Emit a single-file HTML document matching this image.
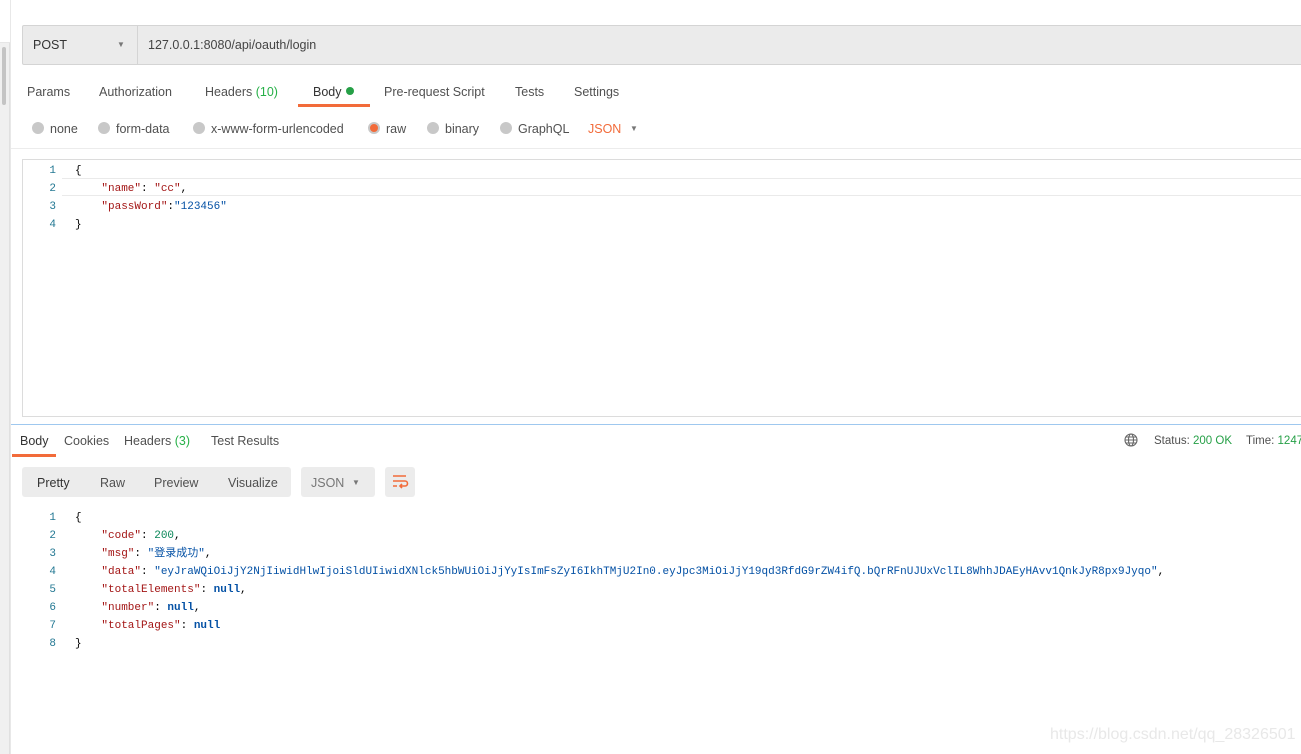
<!DOCTYPE html>
<html><head><meta charset="utf-8"><style>
*{margin:0;padding:0;box-sizing:border-box}
body{width:1301px;height:754px;overflow:hidden;background:#fff;font-family:"Liberation Sans","Noto Sans CJK SC",sans-serif;font-size:12.5px;color:#505050;position:relative}
.a{position:absolute;white-space:nowrap}
.mono{font-family:"Liberation Mono","Noto Sans CJK SC",monospace;font-size:11px;white-space:pre}
.mono div{height:18px;line-height:18px}
.ln{position:absolute;width:20px;text-align:right;color:#237893;font-family:"Liberation Mono",monospace;font-size:11px;line-height:18px}
.k{color:#a31515}.s{color:#0451a5}.n{color:#098658}.nl{color:#0451a5;font-weight:bold}.p{color:#000}
.radio{position:absolute;width:12px;height:12px;border-radius:50%;background:#c8c8c8}
</style></head><body>
<div class="a" style="left:0;top:43px;width:10px;height:711px;background:#f0f0f0;border-right:1px solid #e0e0e0"></div>
<div class="a" style="left:0;top:42px;width:10px;height:1px;background:#e6e6e6"></div>
<div class="a" style="left:2px;top:47px;width:4px;height:58px;background:#c4c4c4;border-radius:2px"></div>
<div class="a" style="left:10px;top:0;width:1px;height:754px;background:#e8e8e8"></div>

<div class="a" style="left:22px;top:25px;width:1290px;height:40px;background:#ebebeb;border:1px solid #d4d4d4;border-radius:2px"></div>
<div class="a" style="left:137px;top:26px;width:1px;height:38px;background:#d4d4d4"></div>
<div class="a" style="left:33px;top:38px;color:#333;font-size:12.5px">POST</div>
<div class="a" style="left:117px;top:40px;color:#777;font-size:8px">▼</div>
<div class="a" style="left:148px;top:38px;color:#444">127.0.0.1:8080/api/oauth/login</div>

<div class="a" style="left:27px;top:85px">Params</div>
<div class="a" style="left:99px;top:85px">Authorization</div>
<div class="a" style="left:205px;top:85px">Headers <span style="color:#26b047">(10)</span></div>
<div class="a" style="left:313px;top:85px;color:#333">Body</div>
<div class="a" style="left:346px;top:87px;width:8px;height:8px;border-radius:50%;background:#26a047"></div>
<div class="a" style="left:298px;top:104px;width:72px;height:3px;background:#f26b3a"></div>
<div class="a" style="left:384px;top:85px">Pre-request Script</div>
<div class="a" style="left:515px;top:85px">Tests</div>
<div class="a" style="left:574px;top:85px">Settings</div>

<div class="radio" style="left:32px;top:122px"></div><div class="a" style="left:50px;top:122px">none</div>
<div class="radio" style="left:98px;top:122px"></div><div class="a" style="left:116px;top:122px">form-data</div>
<div class="radio" style="left:193px;top:122px"></div><div class="a" style="left:211px;top:122px">x-www-form-urlencoded</div>
<div class="radio" style="left:368px;top:122px;background:#f26b3a;border:2px solid #c8c8c8"></div><div class="a" style="left:386px;top:122px">raw</div>
<div class="radio" style="left:427px;top:122px"></div><div class="a" style="left:445px;top:122px">binary</div>
<div class="radio" style="left:500px;top:122px"></div><div class="a" style="left:518px;top:122px">GraphQL</div>
<div class="a" style="left:588px;top:122px;color:#f26b3a">JSON</div>
<div class="a" style="left:630px;top:124px;color:#777;font-size:8px">▼</div>
<div class="a" style="left:11px;top:148px;width:1290px;height:1px;background:#ececec"></div>

<div class="a" style="left:22px;top:159px;width:1290px;height:258px;border:1px solid #dcdcdc"></div>
<div class="a" style="left:62px;top:178px;width:1240px;height:18px;border-top:1px solid #eaeaea;border-bottom:1px solid #eaeaea"></div>
<div class="ln" style="left:36px;top:162px">1<br>2<br>3<br>4</div>
<div class="a mono" style="left:75px;top:162px"><div class="p">{</div><div>    <span class="k">"name"</span><span class="p">: </span><span class="k">"cc"</span><span class="p">,</span></div><div>    <span class="k">"passWord"</span><span class="p">:</span><span class="s">"123456"</span></div><div class="p">}</div></div>

<div class="a" style="left:11px;top:424px;width:1290px;height:1px;background:#9fc8ef"></div>
<div class="a" style="left:20px;top:434px;color:#333">Body</div>
<div class="a" style="left:12px;top:454px;width:44px;height:3px;background:#f26b3a"></div>
<div class="a" style="left:64px;top:434px">Cookies</div>
<div class="a" style="left:124px;top:434px">Headers <span style="color:#26b047">(3)</span></div>
<div class="a" style="left:211px;top:434px">Test Results</div>
<svg class="a" style="left:1124px;top:433px" width="14" height="14" viewBox="0 0 14 14" fill="none" stroke="#666" stroke-width="1.1"><circle cx="7" cy="7" r="6"/><ellipse cx="7" cy="7" rx="2.5" ry="6"/><path d="M1 7h12M2 4h10M2 10h10"/></svg>
<div class="a" style="left:1154px;top:435px;font-size:11.5px">Status: <span style="color:#26a047">200 OK</span></div>
<div class="a" style="left:1246px;top:435px;font-size:11.5px">Time: <span style="color:#26a047">1247</span></div>

<div class="a" style="left:22px;top:467px;width:269px;height:30px;background:#ececec;border-radius:3px"></div>
<div class="a" style="left:37px;top:476px;color:#333">Pretty</div>
<div class="a" style="left:100px;top:476px">Raw</div>
<div class="a" style="left:154px;top:476px">Preview</div>
<div class="a" style="left:228px;top:476px">Visualize</div>
<div class="a" style="left:301px;top:467px;width:74px;height:30px;background:#ececec;border-radius:3px"></div>
<div class="a" style="left:311px;top:476px;color:#777">JSON</div>
<div class="a" style="left:352px;top:478px;color:#777;font-size:8px">▼</div>
<div class="a" style="left:385px;top:467px;width:30px;height:30px;background:#ececec;border-radius:3px"></div>
<svg class="a" style="left:391px;top:474px" width="18" height="16" viewBox="0 0 18 16" fill="none" stroke="#f26b3a" stroke-width="1.6"><path d="M2 2h13M2 7h12a2.5 2.5 0 0 1 0 5H9M11 10l-2 2 2 2M2 12h4"/></svg>

<div class="ln" style="left:36px;top:509px">1<br>2<br>3<br>4<br>5<br>6<br>7<br>8</div>
<div class="a mono" style="left:75px;top:509px"><div class="p">{</div><div>    <span class="k">"code"</span><span class="p">: </span><span class="n">200</span><span class="p">,</span></div><div>    <span class="k">"msg"</span><span class="p">: </span><span class="s">"登录成功"</span><span class="p">,</span></div><div>    <span class="k">"data"</span><span class="p">: </span><span class="s">"eyJraWQiOiJjY2NjIiwidHlwIjoiSldUIiwidXNlck5hbWUiOiJjYyIsImFsZyI6IkhTMjU2In0.eyJpc3MiOiJjY19qd3RfdG9rZW4ifQ.bQrRFnUJUxVclIL8WhhJDAEyHAvv1QnkJyR8px9Jyqo"</span><span class="p">,</span></div><div>    <span class="k">"totalElements"</span><span class="p">: </span><span class="nl">null</span><span class="p">,</span></div><div>    <span class="k">"number"</span><span class="p">: </span><span class="nl">null</span><span class="p">,</span></div><div>    <span class="k">"totalPages"</span><span class="p">: </span><span class="nl">null</span></div><div class="p">}</div></div>

<div class="a" style="left:1050px;top:726px;font-size:16px;color:#e8e8e8">https://blog.csdn.net/qq_28326501</div>
</body></html>
